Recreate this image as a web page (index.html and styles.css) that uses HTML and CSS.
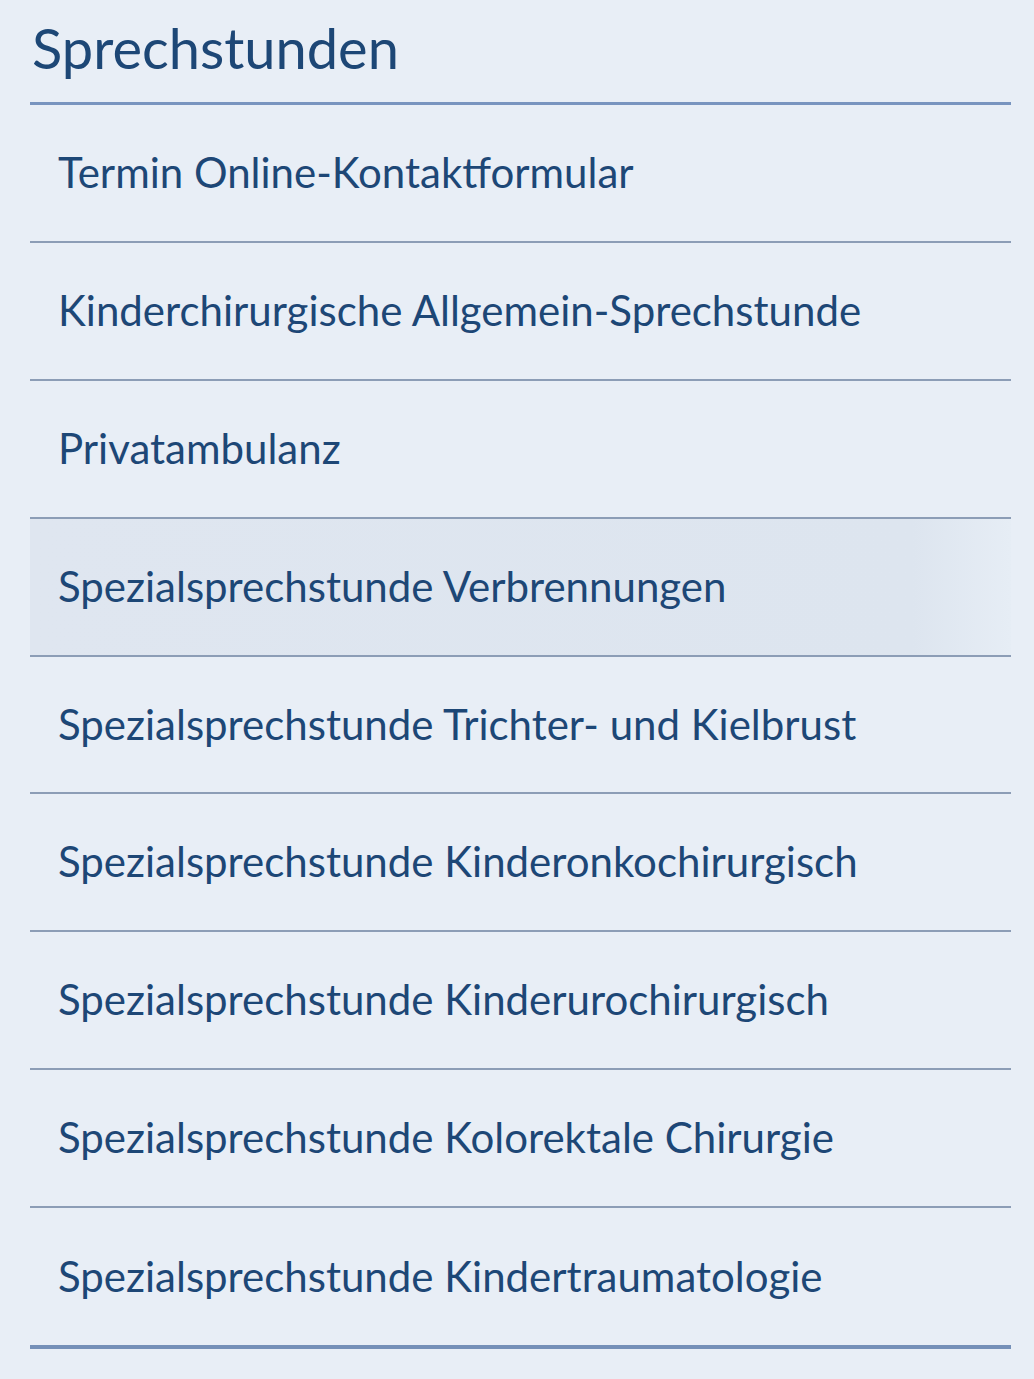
FILE: index.html
```html
<!DOCTYPE html>
<html lang="de">
<head>
  <meta charset="UTF-8">
  <meta name="viewport" content="width=device-width, initial-scale=1.0">
  <title>Sprechstunden</title>
  <link rel="stylesheet" href="styles.css">
</head>
<body>

  <nav class="side-menu">
    <h2 class="side-title">Sprechstunden</h2>
    <ul class="side-list">
      <li><a href="#">Termin Online-Kontaktformular</a></li>
      <li><a href="#">Kinderchirurgische Allgemein-Sprechstunde</a></li>
      <li><a href="#">Privatambulanz</a></li>
      <li class="hover"><a href="#">Spezialsprechstunde Verbrennungen</a></li>
      <li><a href="#">Spezialsprechstunde Trichter- und Kielbrust</a></li>
      <li><a href="#">Spezialsprechstunde Kinderonkochirurgisch</a></li>
      <li><a href="#">Spezialsprechstunde Kinderurochirurgisch</a></li>
      <li><a href="#">Spezialsprechstunde Kolorektale Chirurgie</a></li>
      <li><a href="#">Spezialsprechstunde Kindertraumatologie</a></li>
    </ul>
  </nav>

</body>
</html>
```

FILE: styles.css
```css
* {
  margin: 0;
  padding: 0;
  box-sizing: border-box;
}

body {
  background: #e8eef6;
  font-family: Lato, "Open Sans", sans-serif;
  min-height: 100vh;
}

.side-menu {
  padding: 0 23px 0 30px;
}

.side-title {
  font-size: 56px;
  font-weight: 400;
  color: #1d4776;
  line-height: 1;
  padding: 20px 0 0 2px;
  height: 105px;
  border-bottom: 3px solid #7894bf;
}

.side-list {
  list-style: none;
  border-bottom: 4px solid #7590b8;
}

.side-list li {
  height: 137.9px;
  border-bottom: 2px solid #8c9db6;
  display: flex;
  align-items: center;
}

.side-list li:last-child {
  border-bottom: none;
  height: 137px;
}

.side-list a {
  display: block;
  width: 100%;
  padding: 0 0 2px 28px;
  font-size: 42px;
  color: #1d4776;
  text-decoration: none;
}

.side-list li.hover,
.side-list li:hover {
  background: linear-gradient(90deg, #dfe6f0 0%, #dde5ef 90%, #e6edf5 100%);
}
```
